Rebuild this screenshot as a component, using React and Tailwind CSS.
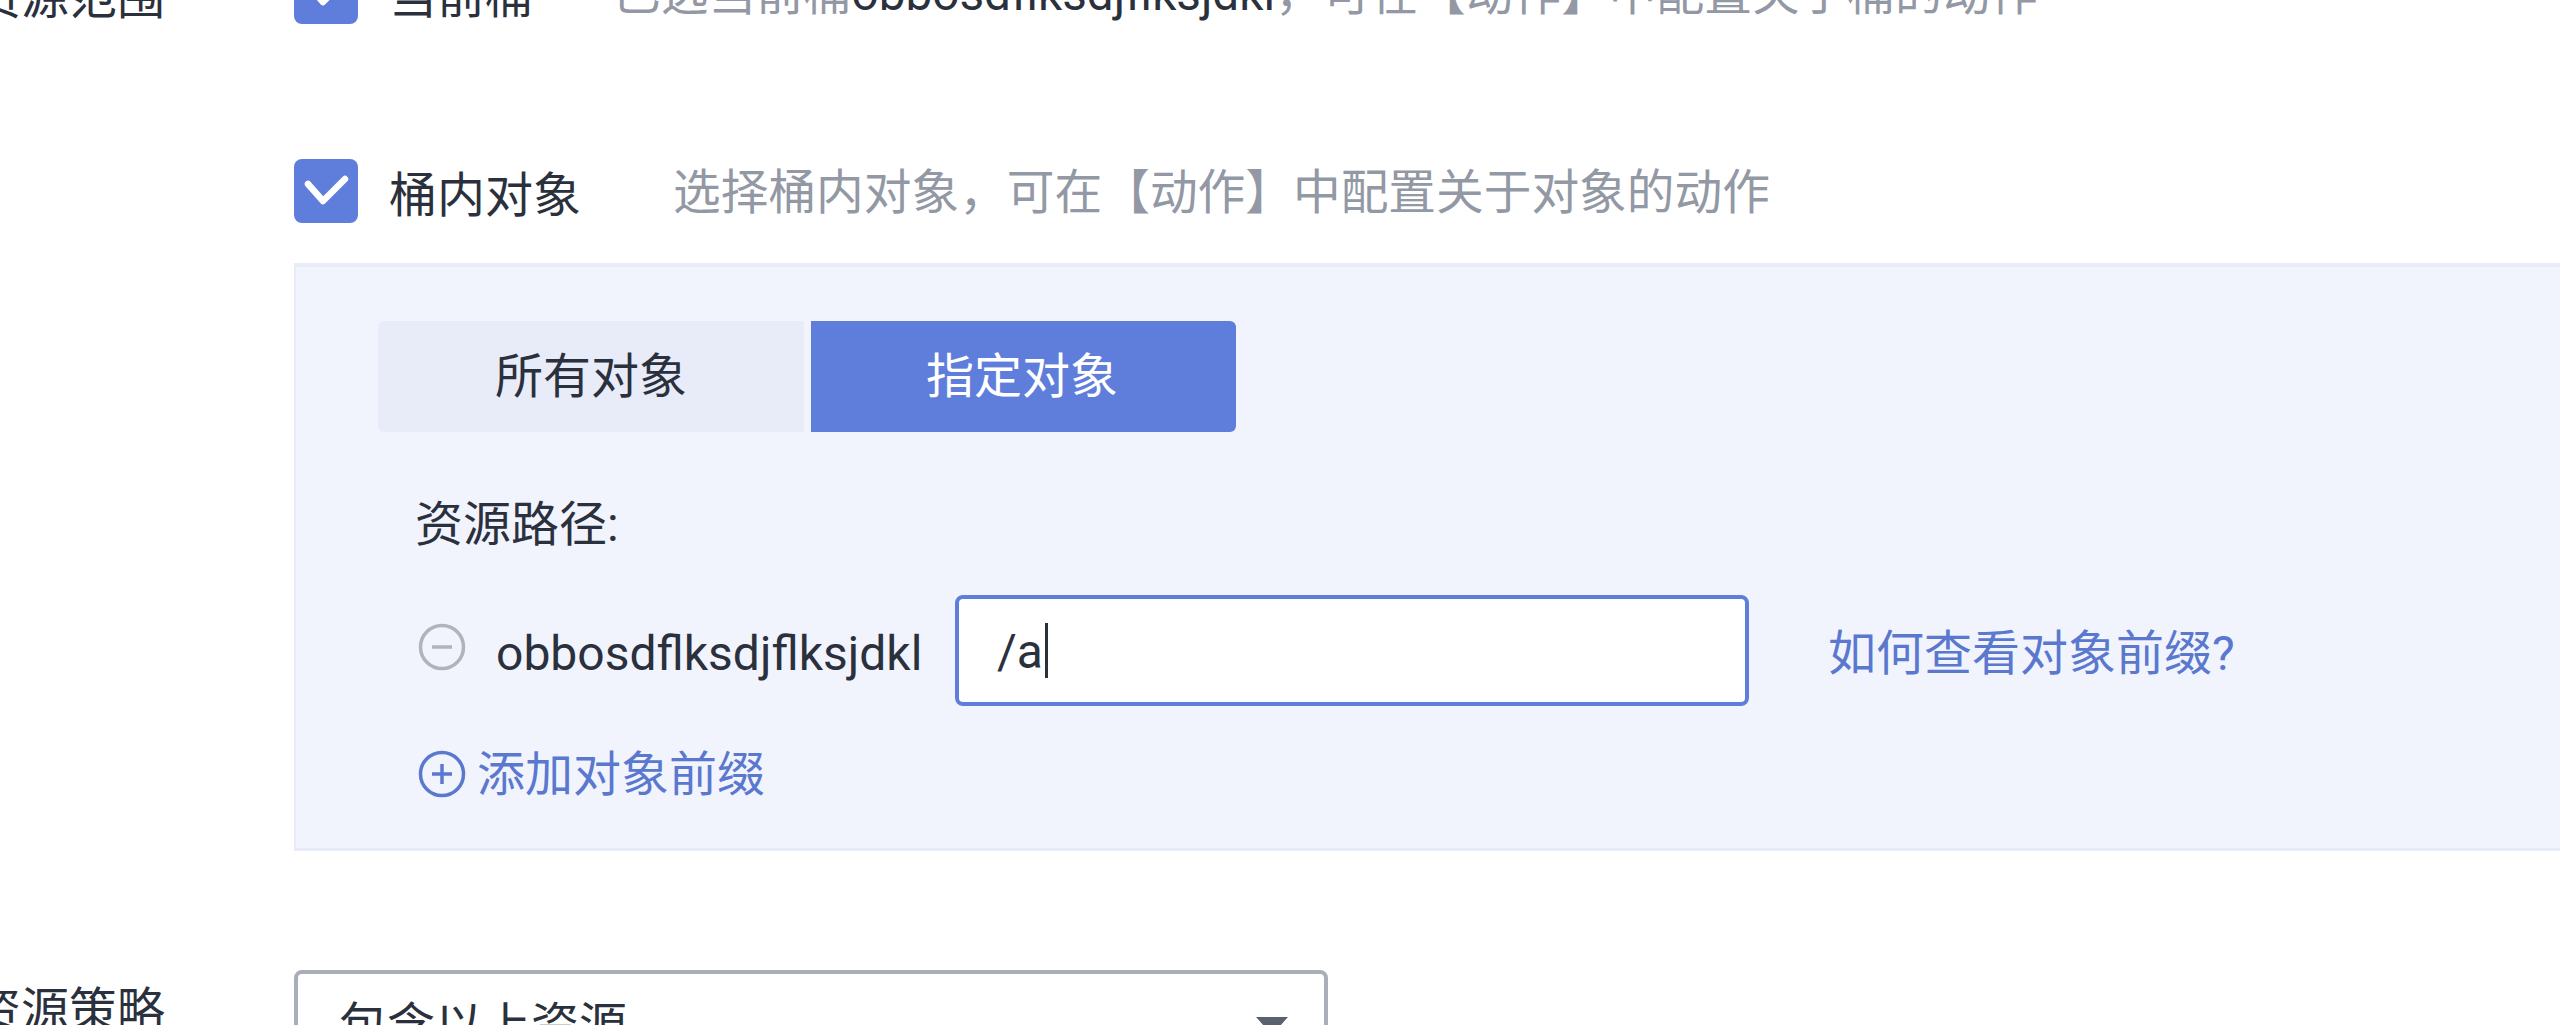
import React from 'react';

const Check = () => (
  <div className="w-[64px] h-[64px] shrink-0 rounded-[8px] bg-[#5f7edb] flex items-center justify-center">
    <svg width="64" height="64" viewBox="0 0 64 64" fill="none">
      <path d="M14 25 L29 42 L51 20" stroke="#fff" strokeWidth="6.5" strokeLinecap="round" strokeLinejoin="round" />
    </svg>
  </div>
);

const CircleIcon = ({ color, plus, className }) => (
  <svg width="48" height="48" viewBox="0 0 48 48" fill="none" className={className}>
    <circle cx="24" cy="24" r="21.5" stroke={color} strokeWidth="3.5" />
    <path d="M14 24 H34" stroke={color} strokeWidth="3.5" />
    {plus && <path d="M24 14 V34" stroke={color} strokeWidth="3.5" />}
  </svg>
);

const Label = ({ children }) => (
  <div className="w-[165px] mr-[129px] shrink-0 flex justify-end whitespace-nowrap text-[48px] leading-[64px]">{children}</div>
);

export default function App() {
  return (
    <div className="w-[2560px] h-[1025px] overflow-hidden bg-white text-[#2b303d] font-['Roboto','Noto_Sans_CJK_SC',sans-serif]">
      {/* Resource scope */}
      <div className="flex mt-[-40px]">
        <div className="pt-[6px]"><Label>资源范围</Label></div>
        <div className="flex-1 min-w-0">
          <div className="flex items-center h-[64px] whitespace-nowrap text-[48px]">
            <Check />
            <span className="ml-[31px] mt-[10px] w-[224px]">当前桶</span>
            <span className="text-[#9298a4] text-[47.7px] mt-[6px]">
              已选当前桶<span className="text-[#2b303d]">obbosdflksdjflksjdkl</span>，可在【动作】中配置关于桶的动作
            </span>
          </div>

          <div className="flex items-center h-[64px] mt-[135px] whitespace-nowrap text-[48px]">
            <Check />
            <span className="ml-[31px] mt-[10px] w-[284px]">桶内对象</span>
            <span className="text-[#9298a4] text-[47.7px] mt-[6px]">选择桶内对象，可在【动作】中配置关于对象的动作</span>
          </div>

          <div className="mt-[40px] h-[588px] bg-[#f1f4fd] border-t-[4px] border-b-[3px] border-l-[2px] border-[#e8ecf9] pt-[54px] pl-[82px]">
            <div className="flex gap-[7px] text-[48px]">
              <div className="w-[426px] h-[111px] flex items-center justify-center rounded-l-[6px] bg-[#e8ecf8]">所有对象</div>
              <div className="w-[425px] h-[111px] flex items-center justify-center rounded-r-[6px] bg-[#5f7edb] text-white pr-[3px]">指定对象</div>
            </div>

            <div className="ml-[37px] mt-[61px] text-[48px] leading-[64px]">资源路径:</div>

            <div className="ml-[40px] mt-[38px] flex items-center h-[111px] text-[48px] whitespace-nowrap">
              <CircleIcon color="#b0b3ba" className="shrink-0 mb-[8px]" />
              <span className="ml-[30px] w-[459px] mt-[6px]">obbosdflksdjflksjdkl</span>
              <div className="w-[794px] h-[111px] shrink-0 flex items-center pl-[38px] bg-white border-[4px] border-[#5f7edb] rounded-[8px]">
                <span className="mt-[2px]">/a</span>
                <span className="w-[3px] h-[55px] ml-[2px] bg-[#2b303d]"></span>
              </div>
              <span className="ml-[79px] mt-[6px] text-[#5b78cf]">如何查看对象前缀?</span>
            </div>

            <div className="ml-[40px] mt-[44px] flex items-center h-[48px] text-[48px] text-[#5b78cf] whitespace-nowrap">
              <CircleIcon color="#5b78cf" plus className="shrink-0" />
              <span className="ml-[11px] mt-[2px]">添加对象前缀</span>
            </div>
          </div>
        </div>
      </div>

      {/* Resource policy */}
      <div className="flex items-start mt-[119px]">
        <div className="mt-[9px]"><Label>资源策略</Label></div>
        <div className="w-[1034px] h-[111px] flex items-center justify-between pl-[41px] pr-[36px] border-[4px] border-[#a9aeb8] rounded-[8px] text-[48px] whitespace-nowrap">
          <span>包含以上资源</span>
          <svg width="32" height="18" viewBox="0 0 32 18" className="shrink-0">
            <path d="M0 0 H32 L16 18 Z" fill="#5c6170" />
          </svg>
        </div>
      </div>
    </div>
  );
}
